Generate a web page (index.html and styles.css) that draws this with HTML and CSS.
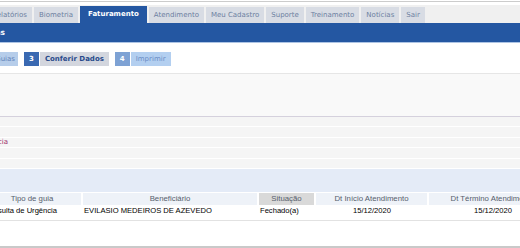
FILE: index.html
```html
<!DOCTYPE html>
<html lang="pt-BR">
<head>
    <meta charset="UTF-8">
    <meta name="viewport" content="width=device-width, initial-scale=1.0">
    <title>Faturamento</title>
    <link rel="stylesheet" href="styles.css">
</head>
<body>
    <div class="page">
        <div class="top-line"></div>

        <div class="tab-strip">
            <div class="cut tab-cut"><a class="tab">Relatórios</a></div>
            <a class="tab">Biometria</a>
            <a class="tab active">Faturamento</a>
            <a class="tab">Atendimento</a>
            <a class="tab">Meu Cadastro</a>
            <a class="tab">Suporte</a>
            <a class="tab">Treinamento</a>
            <a class="tab">Notícias</a>
            <a class="tab">Sair</a>
        </div>

        <div class="title-bar">
            <div class="cut title-cut"><span class="title">Faturamento de Guias</span></div>
        </div>

        <div class="steps">
            <div class="cut steps-cut">
                <div class="step done"><span class="step-num">1</span><span class="step-label">Prestador</span></div>
                <div class="step done"><span class="step-num">2</span><span class="step-label">Selecionar Guias</span></div>
            </div>
            <div class="step current"><span class="step-num">3</span><span class="step-label">Conferir Dados</span></div>
            <div class="step next"><span class="step-num">4</span><span class="step-label">Imprimir</span></div>
        </div>

        <div class="panel"></div>

        <div class="rows">
            <div class="row"></div>
            <div class="row"></div>
            <div class="row">
                <div class="cut row-cut"><span class="row-text">Urgência</span></div>
            </div>
            <div class="row"></div>
            <div class="row"></div>
        </div>

        <div class="band"></div>

        <div class="guides">
            <div class="head">Tipo de guia</div>
            <div class="head">Beneficiário</div>
            <div class="head sorted">Situação</div>
            <div class="head">Dt Início Atendimento</div>
            <div class="head">Dt Término Atendimento</div>

            <div class="cell">Consulta de Urgência</div>
            <div class="cell">EVILASIO MEDEIROS DE AZEVEDO</div>
            <div class="cell">Fechado(a)</div>
            <div class="cell center">15/12/2020</div>
            <div class="cell center">15/12/2020</div>
        </div>

        <div class="guides-end"></div>
        <div class="footer-line"></div>
    </div>
</body>
</html>
```

FILE: styles.css
```css
html {
    background-color: white;
}

body {
    margin: 0;
    font-family: "DejaVu Sans", Verdana, sans-serif;
    font-size: 7px;
}

.page {
    width: 520px;
    overflow: hidden;
}

/* pieces that continue off the left edge */
.cut {
    display: flex;
    justify-content: flex-end;
    flex-shrink: 0;
    white-space: nowrap;
}

.top-line {
    margin-top: 1px;
    height: 1px;
    background-color: #cccccc;
}

.tab-strip {
    margin-top: 3px;
    height: 18px;
    background-color: #f0f0f0;
    display: flex;
    align-items: flex-end;
    gap: 2px;
}

.tab-cut {
    width: 32px;
}

.tab {
    height: 16px;
    line-height: 16px;
    padding: 0 5px;
    background-color: #d8dce4;
    color: #6d7fa1;
    white-space: nowrap;
}

.tab.active {
    height: 17px;
    line-height: 17px;
    padding: 0 8px;
    background-color: #2457a2;
    color: white;
    font-weight: bold;
}

.title-bar {
    height: 19px;
    background-color: #2457a2;
    border-bottom: 1px solid #adc4e4;
    display: flex;
    align-items: center;
}

.title-cut {
    width: 5px;
}

.title {
    color: white;
    font-weight: bold;
    font-size: 7.5px;
}

.steps {
    margin-top: 9px;
    height: 14px;
    display: flex;
    gap: 6px;
}

.steps-cut {
    width: 18px;
    gap: 6px;
}

.step {
    display: flex;
    gap: 1px;
    line-height: 14px;
    white-space: nowrap;
}

.step-num {
    padding: 0 5px;
    color: white;
    font-weight: bold;
}

.step-label {
    padding: 0 5px;
}

.done .step-num {
    background-color: #7ea2d4;
}

.done .step-label {
    padding-right: 3px;
    background-color: #b6cdea;
    color: #6183ba;
}

.current .step-num {
    background-color: #3a69b2;
}

.current .step-label {
    background-color: #d3d6de;
    color: #284a8b;
    font-weight: bold;
}

.next .step-num {
    background-color: #7ea2d4;
}

.next .step-label {
    background-color: #b3cff0;
    color: #6a8cc6;
}

.panel {
    margin-top: 7px;
    height: 42px;
    background-color: #f9f9f9;
    border-top: 1px solid #e6e6e6;
    border-bottom: 1px solid #d5d1dd;
}

.rows {
    display: flex;
    flex-direction: column;
    gap: 1px;
    padding-bottom: 1px;
}

.row {
    height: 9.4px;
    background-color: #f5f5f5;
    display: flex;
    align-items: center;
}

.row-cut {
    width: 8px;
}

.row-text {
    color: #9c2f6c;
}

.band {
    height: 23px;
    background-color: #e4ebf7;
}

.guides {
    margin-top: 1px;
    margin-left: -17px;
    display: grid;
    grid-template-columns: 98px 174px 55px 111px 127px;
    column-gap: 2px;
    font-family: "Liberation Sans", Arial, sans-serif;
}

.head {
    height: 12px;
    line-height: 12px;
    background-color: #eef2f8;
    color: #565e6c;
    font-size: 7.8px;
    text-align: center;
    white-space: nowrap;
    overflow: hidden;
}

.head.sorted {
    background-color: #d9d9d9;
}

.cell {
    line-height: 11px;
    padding-left: 1px;
    color: #000;
    font-size: 7.6px;
    white-space: nowrap;
}

.cell:first-of-type {
    padding-left: 2px;
}

.cell.center {
    text-align: center;
}

.guides-end {
    margin-top: 4px;
    height: 1px;
    background-color: #e2e2e2;
}

.footer-line {
    margin-top: 25px;
    height: 2px;
    background-color: #c9c9c9;
}
```
